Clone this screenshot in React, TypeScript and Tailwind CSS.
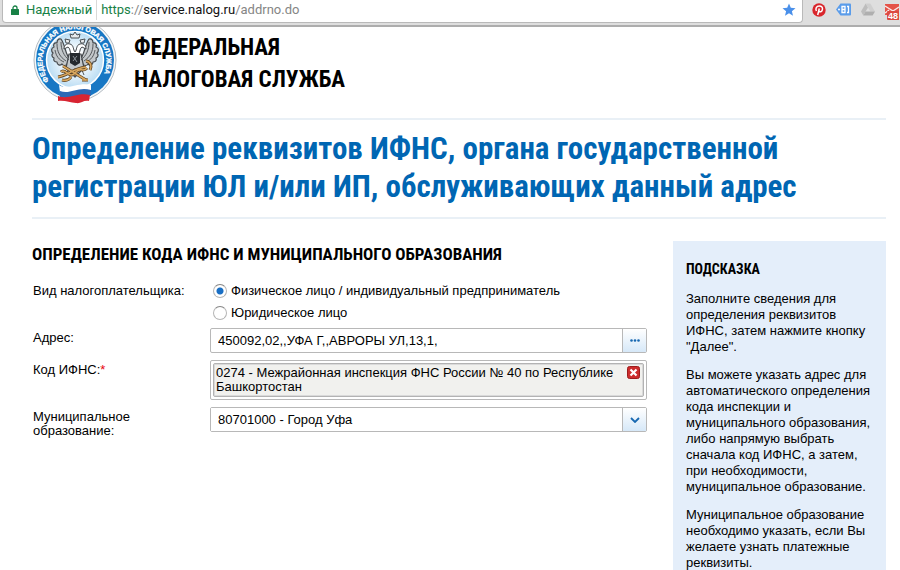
import { useState } from 'react';

const hints = [
  'Заполните сведения для определения реквизитов ИФНС, затем нажмите кнопку "Далее".',
  'Вы можете указать адрес для автоматического определения кода инспекции и муниципального образования, либо напрямую выбрать сначала код ИФНС, а затем, при необходимости, муниципальное образование.',
  'Муниципальное образование необходимо указать, если Вы желаете узнать платежные реквизиты.',
];

const payerTypes = [
  { id: 'person', label: 'Физическое лицо / индивидуальный предприниматель' },
  { id: 'company', label: 'Юридическое лицо' },
];

function BrowserBar() {
  return (
    <div className="flex h-[27px] items-start border-b-2 border-[#adadad] bg-[#dedede] pl-[2px]">
      <div className="flex h-[23px] min-w-0 flex-1 items-center rounded-b border-x border-b border-[#b9b9b9] bg-white px-[6px] pb-[3px] font-[Roboto,sans-serif] text-[13px]">
        <svg className="ml-[2px] h-[10px] w-2 shrink-0" viewBox="0 0 8 10">
          <path d="M2 4.500V3a2 2 0 0 1 4 0v1.500" fill="none" stroke="#188146" strokeWidth="1.300" />
          <rect x="0" y="4" width="8" height="6" rx="0.500" fill="#188146" />
        </svg>
        <span className="ml-[7px] text-[#188146]">Надежный</span>
        <span className="mx-1 h-5 w-px bg-[#d9d9d9]" />
        <span className="flex-1 truncate text-[#858585]">
          <span className="text-[#188146]">https</span>://<span className="text-[#111]">service.nalog.ru</span>/addrno.do
        </span>
        <button type="button" aria-label="Добавить в закладки">
          <svg className="h-[14px] w-[14px]" viewBox="0 0 14 14">
            <path d="M7 .5l1.800 4.300 4.700.4-3.600 3 1.100 4.600L7 10.300l-4 2.500 1.100-4.600-3.600-3 4.700-.4z" fill="#4a90ea" />
          </svg>
        </button>
      </div>
      <div className="flex h-[23px] w-[97px] shrink-0 items-start gap-[10px] pl-[9px] pt-[3px]">
        <button type="button" aria-label="Pinterest" className="shrink-0">
          <svg className="h-[14px] w-[14px]" viewBox="0 0 14 14">
            <circle cx="7" cy="7" r="6.700" fill="#d9262c" />
            <path d="M4.400 8C3.100 5.500 4.500 3 7.200 3c2.500 0 3.700 1.500 3.200 3.600-.4 2.200-2.700 2.900-3.500 1.400M7.300 5.500L5.700 12" fill="none" stroke="#fff" strokeWidth="1.500" />
          </svg>
        </button>
        <button type="button" aria-label="Метки" className="shrink-0">
          <svg className="h-[13px] w-[15px]" viewBox="0 0 15 12">
            <path d="M4.500 0H14a1 1 0 0 1 1 1v10a1 1 0 0 1-1 1H4.500L0 6z" fill="#5a9cea" />
            <circle cx="3" cy="6" r="1" fill="#fff" />
            <path d="M6 3h3v3H6zM6 6h3v3H6zM11 3h1.500v6H11" fill="none" stroke="#fff" strokeWidth="1.300" />
          </svg>
        </button>
        <button type="button" aria-label="Google Диск" className="shrink-0">
          <svg className="h-[13px] w-[14px]" viewBox="0 0 14 12">
            <path d="M4.700 0L0 8l2.300 4L7 4z" fill="#bdbdbd" />
            <path d="M4.700 0h4.600L14 8H9.300z" fill="#cfcfcf" />
            <path d="M4.600 8H14l-2.400 4H2.300z" fill="#afafaf" />
          </svg>
        </button>
        <button type="button" aria-label="Почта" className="shrink-0">
          <svg className="h-[17px] w-[14px]" viewBox="0 0 14 17">
            <path d="M0 1h14v11H0z" fill="#e45348" />
            <path d="M0 3l8 5 6-4M0 10l4-3" fill="none" stroke="#fbeceb" strokeWidth="1.400" />
            <rect x="2" y="8" width="14" height="9" rx="1" fill="#dc4b40" />
            <text x="3" y="16" fontFamily="Liberation Sans, sans-serif" fontSize="9" fontWeight="700" fill="#fff">48</text>
          </svg>
        </button>
      </div>
    </div>
  );
}

function Emblem() {
  return (
    <svg className="h-[78px] w-[84px] shrink-0" viewBox="0 9 84 78" role="img" aria-label="Герб ФНС">
      <defs>
        <radialGradient id="disc">
          <stop offset="0.300" stopColor="#fff" />
          <stop offset="1" stopColor="#b9dcf3" />
        </radialGradient>
        <path id="ring" d="M16 62.500A32 32 0 1 1 67 62.500" />
      </defs>
      <circle cx="42" cy="42" r="41" fill="#f4f7f9" stroke="#b5bcc2" strokeWidth="1" />
      <circle cx="42" cy="42" r="39" fill="#1777c4" />
      <circle cx="42" cy="42" r="28.500" fill="url(#disc)" stroke="#fff" strokeWidth="1.500" />
      <text fontFamily="Liberation Sans, sans-serif" fontSize="7" fontWeight="700" fill="#fff" stroke="#fff" strokeWidth="0.300">
        <textPath href="#ring">ФЕДЕРАЛЬНАЯ НАЛОГОВАЯ СЛУЖБА</textPath>
      </text>
      {/* Wings */}
      <g stroke="#45494d" strokeWidth="1.200" fill="#c3c8cb" strokeLinejoin="round">
        <path d="M38 42C32 38 33 28 28 21c-3-1-4 2-4 4-3-1-4 2-3 4-3 1-3 4-1 6-2 2-1 4 1 5-1 3 1 4 3 4 0 3 3 4 5 2 1 2 4 2 5 0l4 1z" />
        <path d="M46 42c6-4 5-14 10-21 3-1 4 2 4 4 3-1 4 2 3 4 3 1 3 4 1 6 2 2 1 4-1 5 1 3-1 4-3 4 0 3-3 4-5 2-1 2-4 2-5 0l-4 1z" />
        <path d="M36 36h12l3 14-9 9-9-9z" />
      </g>
      <path d="M28 24c0 8 3 14 8 18M24 26c0 8 3 13 9 17M22 32c1 6 4 10 9 12M56 24c0 8-3 14-8 18M60 26c0 8-3 13-9 17M62 32c-1 6-4 10-9 12M36 50l-3 7M48 50l3 7M42 50v9" fill="none" stroke="#54585c" strokeWidth="1" />
      {/* Heads and crowns */}
      <path d="M40 37c-4-2-2-6-5-8l-4 2c0-4 3-6 6-5 4 1 3 6 5 8 2-2 1-7 5-8 3-1 6 1 6 5l-4-2c-3 2-1 6-5 8z" fill="#fff" stroke="#3e4246" strokeWidth="1" />
      <path d="M38 20l-1-4 3 1 2-3 2 3 3-1-1 4zM33 25l-1-4 5 1-1 3zM51 25l1-4-5 1 1 3z" fill="#e8ebed" stroke="#4b5055" strokeWidth="1" />
      <path d="M37 35h10v10l-5 3-5-3z" fill="#25292d" />
      <path d="M40 38l4 6M44 38l-4 5" stroke="#8b9197" strokeWidth="1" />
      {/* Gold caduceus and torch */}
      <g fill="none" stroke="#5e4320" strokeWidth="3">
        <path d="M25 59c9-1 14-8 28-10M30 48l23 14" />
        <path d="M28 54c4-5 9 8 14 1s8 0 12-5M53 43c5 1 6 5 4 9M29 62c4 1 7 0 9-3M49 62h6" />
      </g>
      <g fill="none" stroke="#d9a860" strokeWidth="1.500">
        <path d="M25 59c9-1 14-8 28-10M30 48l23 14" />
        <path d="M28 54c4-5 9 8 14 1s8 0 12-5M53 43c5 1 6 5 4 9M29 62c4 1 7 0 9-3M49 62h6" />
      </g>
      {/* Ribbon */}
      <path d="M26 67c10 6 18-3 32 0v7c-12-4-21 4-31 0z" fill="#fff" />
      <path d="M27 73c10 4 18-5 31-1v6c-12-4-20 5-31 1z" fill="#2c68b5" />
      <path d="M25 78c11 4 19-4 32-1l-1 6c-6-1-8 3-13 2-6 0-11-3-18-2z" fill="#d82432" />
    </svg>
  );
}

export default function App() {
  const [payer, setPayer] = useState('person');
  const [address, setAddress] = useState('450092,02,,УФА Г,,АВРОРЫ УЛ,13,1,');
  const [office, setOffice] = useState('0274 - Межрайонная инспекция ФНС России № 40 по Республике Башкортостан');

  return (
    <div className="h-screen overflow-hidden bg-white font-['Liberation_Sans',Arial,sans-serif] text-[13px] leading-[14px] text-black">
      <BrowserBar />

      <div className="pl-8 pr-[14px]">
        <header className="flex h-[93px] items-start gap-[17px] border-b-2 border-[#e9f0f6] pl-[1px]">
          <Emblem />
          <a href="#home" className="pt-[5px] font-['Roboto_Condensed',Roboto,sans-serif] text-[23px] font-bold leading-8">
            ФЕДЕРАЛЬНАЯ<br />НАЛОГОВАЯ СЛУЖБА
          </a>
        </header>

        <h1 className="border-b-2 border-[#e9f0f6] pb-[11px] pt-[10px] font-['Roboto_Condensed',Roboto,sans-serif] text-[31px] font-bold leading-[38px] text-[#0066b3]">
          Определение реквизитов ИФНС, органа государственной<br />
          регистрации ЮЛ и/или ИП, обслуживающих данный адрес
        </h1>

        <div className="mt-[22px] flex items-start gap-[26px]">
          <form className="min-w-0 flex-1" onSubmit={(e) => e.preventDefault()}>
            <h2 className="mb-[14px] font-['Roboto_Condensed',Roboto,sans-serif] text-[17px] font-bold leading-[26px]">
              ОПРЕДЕЛЕНИЕ КОДА ИФНС И МУНИЦИПАЛЬНОГО ОБРАЗОВАНИЯ
            </h2>

            <div className="grid grid-cols-[177px_1fr] gap-y-[7px] pl-[1px]">
              <span id="payer-label" className="pt-[3px]">Вид налогоплательщика:</span>
              <div role="radiogroup" aria-labelledby="payer-label" className="flex flex-col gap-2 pb-px pl-[3px] pt-[3px]">
                {payerTypes.map((type) => (
                  <label key={type.id} className="flex h-[14px] items-center gap-1">
                    <input
                      type="radio"
                      name="payer"
                      checked={payer === type.id}
                      onChange={() => setPayer(type.id)}
                      className="h-[14px] w-[14px] shrink-0 appearance-none rounded-full border border-[#b5b5b5] border-t-[#858585] bg-white checked:bg-[radial-gradient(circle,#1a6fc4_3px,#fff_4px)]"
                    />
                    {type.label}
                  </label>
                ))}
              </div>

              <label htmlFor="address" className="pt-[3px]">Адрес:</label>
              <div className="flex h-[25px] rounded-[2px] border border-[#b8b8b8]">
                <input
                  id="address"
                  value={address}
                  onChange={(e) => setAddress(e.target.value)}
                  className="min-w-0 flex-1 px-[7px] outline-none"
                />
                <button type="button" aria-label="Выбрать адрес" className="flex w-6 items-center justify-center border-l border-[#b8b8b8] bg-linear-to-b from-white to-[#d6e8f8]">
                  <svg className="h-[3px] w-[10px]" viewBox="0 0 10 3" fill="#1768b1">
                    <circle cx="1.500" cy="1.500" r="1.300" />
                    <circle cx="5" cy="1.500" r="1.300" />
                    <circle cx="8.500" cy="1.500" r="1.300" />
                  </svg>
                </button>
              </div>

              <span id="office-label" className="pt-[3px]">Код ИФНС:<span className="text-red-600">*</span></span>
              <div aria-labelledby="office-label" role="group" className="h-[40px] rounded-[2px] border border-[#b8b8b8] p-[2px]">
                {office && (
                  <div className="flex h-full items-start gap-2 rounded-[2px] border border-[#b3b3b3] bg-[#f1f1ee] py-[2px] pl-[2px] pr-[3px] ring-1 ring-inset ring-[#dadada]">
                    <span className="flex-1">{office}</span>
                    <button type="button" aria-label="Удалить" onClick={() => setOffice('')}>
                      <svg className="h-[13px] w-[13px]" viewBox="0 0 13 13">
                        <rect x="0.500" y="0.500" width="12" height="12" rx="2" fill="#cc2c2c" stroke="#9d1c1c" />
                        <path d="M3.500 3.500l6 6M9.500 3.500l-6 6" stroke="#fff" strokeWidth="2.200" />
                      </svg>
                    </button>
                  </div>
                )}
              </div>

              <label htmlFor="municipality" className="pt-[3px]">Муниципальное<br />образование:</label>
              <div className="grid h-[25px] grid-cols-[1fr_24px] rounded-[2px] border border-[#b8b8b8]">
                <select id="municipality" className="col-span-2 col-start-1 row-start-1 appearance-none bg-white px-[7px] outline-none">
                  <option>80701000 - Город Уфа</option>
                </select>
                <span className="pointer-events-none col-start-2 row-start-1 flex items-center justify-center border-l border-[#b8b8b8] bg-linear-to-b from-white to-[#d6e8f8]">
                  <svg className="h-[6px] w-[10px]" viewBox="0 0 10 6">
                    <path d="M1 1l4 4 4-4" fill="none" stroke="#1768b1" strokeWidth="1.800" />
                  </svg>
                </span>
              </div>
            </div>
          </form>

          <aside className="w-[213px] shrink-0 bg-[#e4eefa] px-[13px] pb-8 pt-[18px]">
            <h3 className="mb-3 font-['Roboto_Condensed',Roboto,sans-serif] text-[14px] font-bold leading-5">ПОДСКАЗКА</h3>
            {hints.map((hint) => (
              <p key={hint} className="mb-3 leading-4">{hint}</p>
            ))}
          </aside>
        </div>
      </div>
    </div>
  );
}
